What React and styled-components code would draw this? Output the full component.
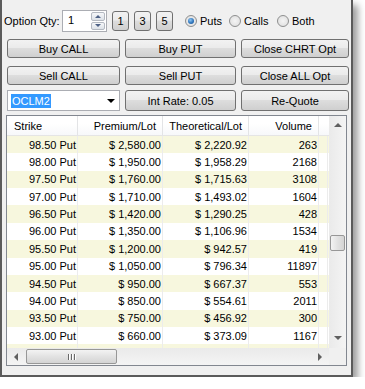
import React from 'react';
import styled, { createGlobalStyle } from 'styled-components';

const rows = [
    ['98.50 Put', '$ 2,580.00', '$ 2,220.92', '263'],
    ['98.00 Put', '$ 1,950.00', '$ 1,958.29', '2168'],
    ['97.50 Put', '$ 1,760.00', '$ 1,715.63', '3108'],
    ['97.00 Put', '$ 1,710.00', '$ 1,493.02', '1604'],
    ['96.50 Put', '$ 1,420.00', '$ 1,290.25', '428'],
    ['96.00 Put', '$ 1,350.00', '$ 1,106.96', '1534'],
    ['95.50 Put', '$ 1,200.00', '$ 942.57', '419'],
    ['95.00 Put', '$ 1,050.00', '$ 796.34', '11897'],
    ['94.50 Put', '$ 950.00', '$ 667.37', '553'],
    ['94.00 Put', '$ 850.00', '$ 554.61', '2011'],
    ['93.50 Put', '$ 750.00', '$ 456.92', '300'],
    ['93.00 Put', '$ 660.00', '$ 373.09', '1167'],
    ['', '', '', ''],
];

const cols = [71, 85, 86, 70, 9];

const GlobalStyle = createGlobalStyle`
    body {
        margin: 0;
        background: #ffffff;
        font-family: "Liberation Sans", Arial, sans-serif;
        font-size: 11px;
        color: #000;
    }
`;

const Window = styled.div`
    box-sizing: border-box;
    width: 353px;
    height: 377px;
    background: #f0f0f0;
    border: 2px solid #5b5b5b;
    border-top: none;
    box-shadow: 5px 5px 7px rgba(0, 0, 0, 0.38);
    overflow: hidden;
`;

const TopRow = styled.div`
    display: flex;
    align-items: center;
    height: 22px;
    margin-top: 10px;
    padding-left: 2px;
`;

const Label = styled.span`
    width: 58px;
    white-space: nowrap;
`;

const Spin = styled.div`
    box-sizing: border-box;
    width: 45px;
    height: 22px;
    background: #fff;
    border: 1px solid #abadb3;
    display: flex;
    align-items: stretch;
`;

const SpinText = styled.span`
    flex: 1;
    padding: 3px 0 0 5px;
`;

const SpinButtons = styled.div`
    width: 14px;
    display: flex;
    flex-direction: column;
    gap: 1px;
    padding: 1px 1px 1px 0;
`;

const SpinButton = styled.div`
    flex: 1;
    border: 1px solid #b4b9c1;
    border-radius: 2px;
    background: linear-gradient(#f6f7f9, #dde2e8);
    display: flex;
    align-items: center;
    justify-content: center;
    &::after {
        content: "";
        border-left: 3px solid transparent;
        border-right: 3px solid transparent;
        ${p => p.$down ? 'border-top: 3px solid #4d6185;' : 'border-bottom: 3px solid #4d6185;'}
    }
`;

const QtyButton = styled.button`
    box-sizing: border-box;
    width: 17px;
    height: 20px;
    margin-left: ${p => p.$ml}px;
    padding: 0;
    font: inherit;
    color: #000;
    border: 1px solid #707070;
    border-radius: 3px;
    background: linear-gradient(#f2f2f2 0%, #ebebeb 45%, #dddddd 50%, #cfcfcf 100%);
`;

const Radio = styled.label`
    display: flex;
    align-items: center;
    gap: 3px;
    width: ${p => p.$w}px;
    margin-left: ${p => p.$ml || 0}px;
`;

const RadioDot = styled.span`
    box-sizing: border-box;
    width: 12px;
    height: 12px;
    border-radius: 50%;
    border: 1px solid #8e8f8f;
    background: radial-gradient(circle at 50% 50%, #f4f4f4 0%, #dcdcdc 100%);
    display: flex;
    align-items: center;
    justify-content: center;
    &::after {
        content: "";
        display: ${p => p.$on ? 'block' : 'none'};
        width: 6px;
        height: 6px;
        border-radius: 50%;
        background: radial-gradient(circle at 40% 35%, #8fc6f2 0%, #2f76bd 55%, #1a4f8a 100%);
    }
`;

const ButtonRow = styled.div`
    display: grid;
    grid-template-columns: 113px 111px 108px;
    column-gap: 5px;
    height: ${p => p.$h}px;
    margin-top: ${p => p.$mt}px;
    padding-left: 5px;
`;

const Btn = styled.button`
    box-sizing: border-box;
    padding: 0;
    font: inherit;
    color: #000;
    border: 1px solid #707070;
    border-radius: 3px;
    background: linear-gradient(#f2f2f2 0%, #ebebeb 45%, #dddddd 50%, #cfcfcf 100%);
`;

const Combo = styled.div`
    box-sizing: border-box;
    height: 21px;
    background: #fff;
    border: 1px solid #abadb3;
    display: flex;
    align-items: center;
    padding-left: 3px;
`;

const Selected = styled.span`
    background: #3399ff;
    color: #fff;
    padding: 1px 1px;
`;

const ComboArrow = styled.span`
    margin-left: auto;
    margin-right: 4px;
    border-left: 4px solid transparent;
    border-right: 4px solid transparent;
    border-top: 4px solid #000;
`;

const Table = styled.div`
    box-sizing: border-box;
    width: 341px;
    height: 251px;
    margin: 5px 0 0 4px;
    border: 1px solid #828790;
    background: #fff;
    display: grid;
    grid-template-columns: 1fr 17px;
    grid-template-rows: 1fr 17px;
`;

const View = styled.div`
    overflow: hidden;
`;

const HeaderRow = styled.div`
    display: flex;
    height: 20px;
    background: linear-gradient(#ffffff 0%, #ffffff 40%, #f7f8fa 100%);
    border-bottom: 1px solid #e5e5e5;
    box-sizing: border-box;
`;

const HeadCell = styled.div`
    box-sizing: border-box;
    flex: none;
    width: ${p => p.$w}px;
    border-right: 1px solid #e3e4e6;
    display: flex;
    align-items: center;
    justify-content: ${p => p.$left ? 'flex-start' : 'flex-end'};
    padding: 0 6px 0 7px;
    white-space: nowrap;
    overflow: hidden;
`;

const DataRow = styled.div`
    display: flex;
    height: 17.36px;
    background: ${p => p.$odd ? '#f7f7de' : '#ffffff'};
`;

const Cell = styled.div`
    box-sizing: border-box;
    flex: none;
    width: ${p => p.$w}px;
    border-right: 1px solid #ececec;
    display: flex;
    align-items: center;
    justify-content: flex-end;
    padding-right: 1px;
    white-space: nowrap;
`;

const VScroll = styled.div`
    background: linear-gradient(90deg, #eaeaea, #f4f4f4);
    display: flex;
    flex-direction: column;
    align-items: center;
`;

const HScroll = styled.div`
    background: linear-gradient(#eaeaea, #f4f4f4);
    display: flex;
    align-items: center;
`;

const Corner = styled.div`
    background: #f0f0f0;
`;

const Arrow = styled.span`
    width: 0;
    height: 0;
    ${p => p.$dir === 'up' && 'border-left: 4px solid transparent; border-right: 4px solid transparent; border-bottom: 4px solid #606060; margin-top: 7px;'}
    ${p => p.$dir === 'down' && 'border-left: 4px solid transparent; border-right: 4px solid transparent; border-top: 4px solid #606060; margin-bottom: 8px;'}
    ${p => p.$dir === 'left' && 'border-top: 4px solid transparent; border-bottom: 4px solid transparent; border-right: 4px solid #606060; margin-left: 7px;'}
    ${p => p.$dir === 'right' && 'border-top: 4px solid transparent; border-bottom: 4px solid transparent; border-left: 4px solid #606060; margin-right: 7px;'}
`;

const VThumb = styled.div`
    box-sizing: border-box;
    width: 15px;
    height: 16px;
    margin-top: 108px;
    border: 1px solid #979797;
    border-radius: 2px;
    background: linear-gradient(90deg, #f3f3f3, #e2e2e2 50%, #d4d4d4);
`;

const Spacer = styled.div`
    flex: 1;
`;

const HThumb = styled.div`
    box-sizing: border-box;
    width: 91px;
    height: 15px;
    margin-left: 8px;
    border: 1px solid #979797;
    border-radius: 2px;
    background: linear-gradient(#f3f3f3, #e2e2e2 50%, #d4d4d4);
    display: flex;
    align-items: center;
    justify-content: center;
    gap: 2px;
`;

const Grip = styled.span`
    width: 1px;
    height: 6px;
    background: #6a6a6a;
    box-shadow: 1px 0 0 #fff;
`;

export default function App() {
    return (
        <>
            <GlobalStyle />
            <Window>
                <TopRow>
                    <Label>Option Qty:</Label>
                    <Spin>
                        <SpinText>1</SpinText>
                        <SpinButtons>
                            <SpinButton />
                            <SpinButton $down />
                        </SpinButtons>
                    </Spin>
                    <QtyButton $ml={5}>1</QtyButton>
                    <QtyButton $ml={5}>3</QtyButton>
                    <QtyButton $ml={5}>5</QtyButton>
                    <Radio $w={44} $ml={12}><RadioDot $on />Puts</Radio>
                    <Radio $w={48}><RadioDot />Calls</Radio>
                    <Radio $w={40}><RadioDot />Both</Radio>
                </TopRow>

                <ButtonRow $mt={7} $h={19}>
                    <Btn>Buy CALL</Btn>
                    <Btn>Buy PUT</Btn>
                    <Btn>Close CHRT Opt</Btn>
                </ButtonRow>
                <ButtonRow $mt={8} $h={19}>
                    <Btn>Sell CALL</Btn>
                    <Btn>Sell PUT</Btn>
                    <Btn>Close ALL Opt</Btn>
                </ButtonRow>
                <ButtonRow $mt={5} $h={20}>
                    <Combo>
                        <Selected>OCLM2</Selected>
                        <ComboArrow />
                    </Combo>
                    <Btn>Int Rate: 0.05</Btn>
                    <Btn>Re-Quote</Btn>
                </ButtonRow>

                <Table>
                    <View>
                        <HeaderRow>
                            <HeadCell $w={cols[0]} $left>Strike</HeadCell>
                            <HeadCell $w={cols[1]}>Premium/Lot</HeadCell>
                            <HeadCell $w={cols[2]}>Theoretical/Lot</HeadCell>
                            <HeadCell $w={cols[3]}>Volume</HeadCell>
                            <HeadCell $w={cols[4]} />
                        </HeaderRow>
                        {rows.map((r, i) => (
                            <DataRow key={i} $odd={i % 2 === 0}>
                                {r.map((v, j) => (
                                    <Cell key={j} $w={cols[j]}>{v}</Cell>
                                ))}
                                <Cell $w={cols[4]} />
                            </DataRow>
                        ))}
                    </View>
                    <VScroll>
                        <Arrow $dir="up" />
                        <VThumb />
                        <Spacer />
                        <Arrow $dir="down" />
                    </VScroll>
                    <HScroll>
                        <Arrow $dir="left" />
                        <HThumb>
                            <Grip /><Grip /><Grip />
                        </HThumb>
                        <Spacer />
                        <Arrow $dir="right" />
                    </HScroll>
                    <Corner />
                </Table>
            </Window>
        </>
    );
}
